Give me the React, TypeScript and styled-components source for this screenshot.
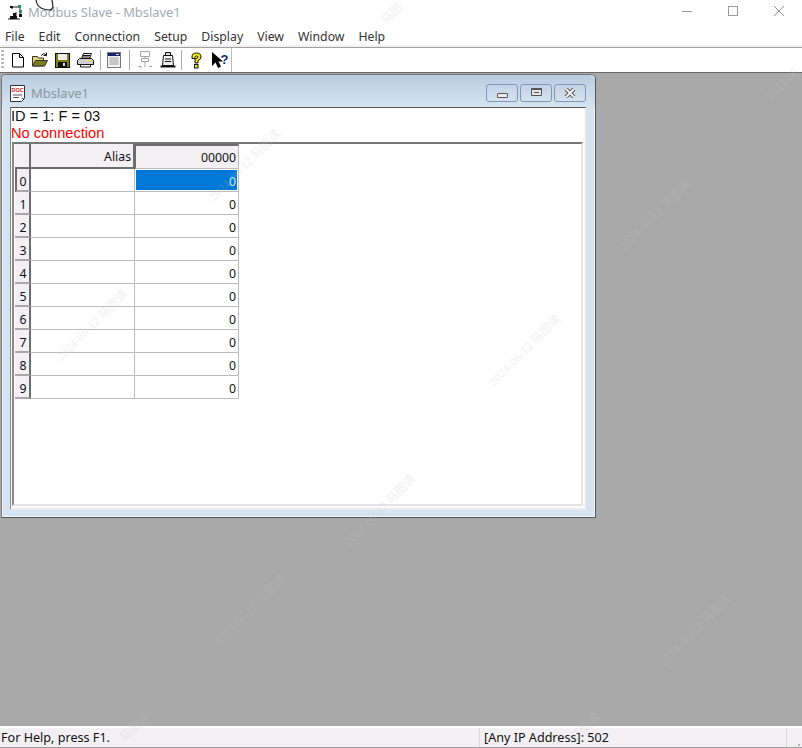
import styled, { createGlobalStyle } from 'styled-components';

const GlobalStyle = createGlobalStyle`
  html, body {
    margin: 0;
    padding: 0;
    background: #ffffff;
  }
  * {
    box-sizing: border-box;
  }
`;

const menus = ['File', 'Edit', 'Connection', 'Setup', 'Display', 'View', 'Window', 'Help'];
const rows = [0, 1, 2, 3, 4, 5, 6, 7, 8, 9];
const fullMark = '2024-06-12 马图读';
const marks: [number, number, string][] = [
  [92, 325, fullMark],
  [525, 350, fullMark],
  [380, 510, fullMark],
  [655, 215, fullMark],
  [245, 165, fullMark],
  [250, 610, fullMark],
  [695, 630, fullMark],
  [135, 727, '马图读'],
  [585, 727, '马图读'],
  [782, 84, '2024-06'],
  [392, 14, '马图'],
];

function AppIcon() {
  return (
    <svg width="16" height="16" viewBox="0 0 16 16">
      <path d="M1 14.500h12v1H1zM3 12h7v2.500H3z" fill="#111" />
      <path d="M5 3h6M5 3v2M13 3v9M9 8v4" stroke="#222" strokeWidth="1" fill="none" />
      <rect x="3" y="2" width="3" height="2" fill="#111" />
      <rect x="11" y="1" width="3" height="3" fill="#2f8f4f" />
      <rect x="12" y="6" width="3" height="3" fill="#2f8f4f" />
      <rect x="12" y="10" width="3" height="3" fill="#111" />
      <rect x="6" y="9" width="3" height="3" fill="#111" />
    </svg>
  );
}

function NewIcon() {
  return (
    <svg width="14" height="16" viewBox="0 0 14 16">
      <path d="M1.500 1.500h7l4 4v9.500h-11z" fill="#fff" stroke="#000" />
      <path d="M8.500 1.500v4h4" fill="none" stroke="#000" />
    </svg>
  );
}

function OpenIcon() {
  return (
    <svg width="16" height="16" viewBox="0 0 16 16">
      <path d="M.5 4.500h5l1 1.500h5v8h-11z" fill="#e5d56a" stroke="#333" />
      <path d="M3.500 8.500h12l-3 5.500h-12z" fill="#7e7e1e" stroke="#333" />
      <path d="M9 3.500q2.500-3 5-1M14.500 .5v3h-3" fill="none" stroke="#111" />
    </svg>
  );
}

function SaveIcon() {
  return (
    <svg width="15" height="15" viewBox="0 0 15 15">
      <rect x=".5" y=".5" width="14" height="14" fill="#7e7e1e" stroke="#111" />
      <rect x="3" y="1" width="9" height="6" fill="#eeeeee" />
      <rect x="3" y="9" width="9" height="5" fill="#111" />
      <rect x="8" y="10" width="2" height="3" fill="#e0e0e0" />
    </svg>
  );
}

function PrintIcon() {
  return (
    <svg width="17" height="16" viewBox="0 0 17 16">
      <path d="M4.500 6.500l2-5h8l-2 5z" fill="#fff" stroke="#111" />
      <path d="M6 3.500h7M5.500 5h7" stroke="#111" />
      <path d="M2.500 6.500h12l2 2v4h-16v-4z" fill="#cfcfcf" stroke="#111" />
      <rect x="11" y="8" width="3" height="1.500" fill="#e6d93c" />
      <path d="M3.500 12.500h10v2.500h-10z" fill="#fff" stroke="#111" />
    </svg>
  );
}

function WindowIcon() {
  return (
    <svg width="14" height="16" viewBox="0 0 14 16">
      <rect x=".5" y=".5" width="13" height="15" fill="#f3f1f4" stroke="#777" />
      <rect x="1" y="1" width="12" height="3" fill="#16246e" />
      <rect x="9" y="2" width="3" height="1" fill="#dfe3f2" />
      <path d="M2.500 6h9M2.500 8h9M2.500 10h9M2.500 12h9" stroke="#9a9a9a" />
    </svg>
  );
}

function ConnectIcon() {
  return (
    <svg width="16" height="18" viewBox="0 0 16 18">
      <path d="M3.500.5h9v5h-9zM4.500 7.500h7v3h-7zM8 5v2M8 11v3" fill="none" stroke="#a4a4a4" />
      <path d="M1 15.500h3v2M12 15.500h3M7 15h2" fill="none" stroke="#a4a4a4" />
    </svg>
  );
}

function DisconnectIcon() {
  return (
    <svg width="16" height="18" viewBox="0 0 16 18">
      <path d="M5.500 4.500v-3h5v3" fill="#ddd" stroke="#111" />
      <path d="M3.500 4.500h9l1 10h-11z" fill="#f3f1f4" stroke="#111" />
      <path d="M5 8h6M5 10.500h6" stroke="#111" />
      <path d="M.5 15.500h15" stroke="#111" strokeWidth="2" />
    </svg>
  );
}

function HelpIcon() {
  return (
    <svg width="11" height="17" viewBox="0 0 11 17">
      <path
        d="M1 5q0-4 4.500-4t4.500 4q0 2.500-3 3.500v2.500h-3v-4q3-1 3-2t-1.500-1-1.500 1.500v1h-3z"
        fill="#f4f000"
        stroke="#111"
      />
      <rect x="3.500" y="12.500" width="3.500" height="3.500" fill="#f4f000" stroke="#111" />
    </svg>
  );
}

function ContextHelpIcon() {
  return (
    <svg width="17" height="16" viewBox="0 0 17 16">
      <path d="M0 0v14l3.500-3.500 2.500 5.500 3-1.500-2.500-5h4.500z" fill="#000" />
      <text x="8.500" y="12" fontFamily="Liberation Sans, sans-serif" fontWeight="700" fontSize="13" fill="#16246e">
        ?
      </text>
    </svg>
  );
}

function DocIcon() {
  return (
    <svg width="16" height="17" viewBox="0 0 16 17">
      <path d="M.5.5h14v13l-3 3h-11z" fill="#fff" stroke="#333" />
      <text x="1.500" y="7" fontFamily="Liberation Sans, sans-serif" fontWeight="700" fontSize="5.500" fill="#d82020">
        DOC
      </text>
      <path d="M3 10h9M3 12.500h6" stroke="#555" />
      <path d="M11.500 13.500h3" stroke="#2a8f8f" />
    </svg>
  );
}

export default function App() {
  return (
    <>
      <GlobalStyle />
      <Page>
        <TitleBar>
          <AppTitle>
            <AppIcon />
            <TitleText>Modbus Slave - Mbslave1</TitleText>
          </AppTitle>
          <Caption>
            <CaptionBtn>
              <svg width="10" height="10" viewBox="0 0 10 10">
                <path d="M0 5.500h10" stroke="#999" />
              </svg>
            </CaptionBtn>
            <CaptionBtn>
              <svg width="10" height="10" viewBox="0 0 10 10">
                <rect x=".5" y=".5" width="9" height="9" fill="none" stroke="#999" />
              </svg>
            </CaptionBtn>
            <CaptionBtn>
              <svg width="10" height="10" viewBox="0 0 10 10">
                <path d="M0 0l10 10M10 0L0 10" stroke="#999" />
              </svg>
            </CaptionBtn>
          </Caption>
        </TitleBar>

        <MenuBar>
          {menus.map((m) => (
            <MenuItem key={m}>{m}</MenuItem>
          ))}
        </MenuBar>

        <ToolBar>
          <Grip />
          <ToolGroup $width={96} $pad={7} $gap={7}>
            <NewIcon />
            <OpenIcon />
            <SaveIcon />
            <PrintIcon />
          </ToolGroup>
          <ToolSep />
          <ToolGroup $width={28} $pad={6} $gap={0}>
            <WindowIcon />
          </ToolGroup>
          <ToolSep />
          <ToolGroup $width={51} $pad={7} $gap={7}>
            <ConnectIcon />
            <DisconnectIcon />
          </ToolGroup>
          <ToolSep />
          <ToolGroup $width={49} $pad={9} $gap={10}>
            <HelpIcon />
            <ContextHelpIcon />
          </ToolGroup>
          <ToolEnd />
        </ToolBar>

        <Workspace>
          <ChildWindow>
            <ChildTitle>
              <ChildName>
                <DocIcon />
                <ChildText>Mbslave1</ChildText>
              </ChildName>
              <ChildButtons>
                <ChildBtn>
                  <MinGlyph />
                </ChildBtn>
                <ChildBtn>
                  <MaxGlyph />
                </ChildBtn>
                <ChildBtn>
                  <svg width="12" height="10" viewBox="0 0 12 10">
                    <path d="M2 1l8 8M10 1L2 9" stroke="#555" strokeWidth="4" />
                    <path d="M2 1l8 8M10 1L2 9" stroke="#f6f6f6" strokeWidth="2" />
                  </svg>
                </ChildBtn>
              </ChildButtons>
            </ChildTitle>
            <ChildBody>
              <InfoLine>ID = 1: F = 03</InfoLine>
              <InfoLine $error>No connection</InfoLine>
              <GridFrame>
                <DataGrid>
                  <HeadCell />
                  <HeadCell>Alias</HeadCell>
                  <HeadCell $current>00000</HeadCell>
                  {rows.map((r) => (
                    <GridRow key={r}>
                      <RowHead $current={r === 0}>{r}</RowHead>
                      <Cell />
                      <Cell $selected={r === 0}>0</Cell>
                    </GridRow>
                  ))}
                </DataGrid>
              </GridFrame>
            </ChildBody>
          </ChildWindow>
        </Workspace>

        <StatusBar>
          <StatusHelp>For Help, press F1.</StatusHelp>
          <StatusAddress>[Any IP Address]: 502</StatusAddress>
          <StatusGrip />
        </StatusBar>

        {marks.map(([x, y, text]) => (
          <Watermark key={`${x}-${y}`} style={{ left: x, top: y }}>
            {text}
          </Watermark>
        ))}
        <CursorHint width="20" height="11" viewBox="0 0 20 11">
          <path d="M1 0q1 6 5 8t8 2q3 0 4-3l-1-7" fill="#fff" stroke="#222" strokeWidth="1.200" />
        </CursorHint>
      </Page>
    </>
  );
}

const Page = styled.div`
  position: relative;
  width: 802px;
  height: 748px;
  display: flex;
  flex-direction: column;
  overflow: hidden;
  background: #fff;
  font-family: 'Noto Sans', 'Open Sans', sans-serif;
`;

const Watermark = styled.span`
  position: absolute;
  transform: translate(-50%, -50%) rotate(-45deg);
  font-family: 'Liberation Serif', 'Noto Sans CJK SC', serif;
  font-size: 12px;
  line-height: 12px;
  white-space: nowrap;
  color: #c4c4c4;
  opacity: 0.25;
  pointer-events: none;
`;

const CursorHint = styled.svg`
  position: absolute;
  left: 35px;
  top: 0;
`;

const TitleBar = styled.div`
  height: 24px;
  display: flex;
  align-items: center;
  justify-content: space-between;
  background: #fff;
  flex: none;
`;

const AppTitle = styled.div`
  display: flex;
  align-items: center;
  padding-left: 7px;
  gap: 5px;
`;

const TitleText = styled.span`
  font-size: 12.900px;
  color: #a2abb4;
`;

const Caption = styled.div`
  display: flex;
  margin-top: -2px;
`;

const CaptionBtn = styled.div`
  width: 46px;
  height: 24px;
  display: flex;
  align-items: center;
  justify-content: center;
`;

const MenuBar = styled.div`
  height: 23px;
  display: flex;
  align-items: center;
  gap: 14px;
  padding: 3px 0 0 5px;
  background: #fff;
  border-bottom: 2px solid #f3f0f3;
  flex: none;
`;

const MenuItem = styled.span`
  font-size: 12.250px;
  color: #333;
`;

const ToolBar = styled.div`
  height: 26px;
  display: flex;
  align-items: center;
  border-top: 1px solid #a0a0a0;
  border-bottom: 1px solid #6a6a6a;
  background: #fff;
  flex: none;
`;

const Grip = styled.div`
  width: 3px;
  height: 20px;
  margin-left: 1px;
  background: repeating-linear-gradient(to bottom, #b8b8b8 0 2px, transparent 2px 4px);
`;

const ToolGroup = styled.div<{ $width: number; $pad: number; $gap: number }>`
  width: ${(p) => p.$width}px;
  display: flex;
  align-items: center;
  padding-left: ${(p) => p.$pad}px;
  gap: ${(p) => p.$gap}px;
`;

const ToolSep = styled.div`
  width: 1px;
  height: 20px;
  background: #a8a8a8;
`;

const ToolEnd = styled.div`
  width: 1px;
  height: 24px;
  background: #bbbbbb;
`;

const Workspace = styled.div`
  position: relative;
  flex: 1;
  background: #a9a9a9;
`;

const ChildWindow = styled.div`
  position: absolute;
  left: 1px;
  top: 1px;
  width: 595px;
  height: 444px;
  display: flex;
  flex-direction: column;
  border: 1px solid #555;
  border-top-color: #777;
  border-left-color: #777;
  border-radius: 5px 5px 0 0;
  background: #d6e4f1;
  box-shadow: inset 0 0 0 1px #f4f8fb;
`;

const ChildTitle = styled.div`
  height: 32px;
  flex: none;
  display: flex;
  align-items: center;
  justify-content: space-between;
  padding: 4px 9px 0 8px;
  background: linear-gradient(to bottom, #b9cce0, #d6e4f1);
  border-radius: 5px 5px 0 0;
`;

const ChildName = styled.div`
  display: flex;
  align-items: center;
  gap: 5px;
`;

const ChildText = styled.span`
  font-size: 13px;
  color: #8d959d;
`;

const ChildButtons = styled.div`
  display: flex;
  gap: 2px;
`;

const ChildBtn = styled.div`
  width: 32px;
  height: 18px;
  display: flex;
  align-items: center;
  justify-content: center;
  border: 1px solid #8197ba;
  border-radius: 3px;
  background: linear-gradient(to bottom, #c3d2e5, #d6e2f0);
`;

const MinGlyph = styled.div`
  width: 11px;
  height: 5px;
  margin-top: 5px;
  background: #ececec;
  border: 1px solid #555;
  border-radius: 1px;
`;

const MaxGlyph = styled.div`
  width: 11px;
  height: 8px;
  margin-top: -3px;
  background: #e4e4e4;
  border: 1px solid #555;
  border-top-width: 2px;
  border-radius: 1px;
  box-shadow: inset 0 0 0 2px #e4e4e4, inset 0 0 0 4px #555;
`;

const ChildBody = styled.div`
  flex: 1;
  margin: 0 8px 7px 8px;
  display: flex;
  flex-direction: column;
  background: #fff;
  border-top: 1px solid #555;
  border-left: 1px solid #888;
  border-right: 2px solid #e6e2e6;
  border-bottom: 2px solid #efeaef;
`;

const InfoLine = styled.div<{ $error?: boolean }>`
  height: 17px;
  line-height: 17px;
  font-family: 'Liberation Sans', Arial, sans-serif;
  font-size: 14.600px;
  color: ${(p) => (p.$error ? '#ff0000' : '#111')};
  flex: none;
`;

const GridFrame = styled.div`
  flex: 1;
  margin: 0 2px 2px 1px;
  padding: 0 0 0 1px;
  border-top: 2px solid #777;
  border-left: 2px solid #888;
  border-bottom: 2px solid #e4e4e4;
  border-right: 2px solid #e8e4e8;
  background: #fff;
`;

const DataGrid = styled.div`
  display: grid;
  grid-template-columns: 16px 104px 104px;
  grid-template-rows: 25px;
  grid-auto-rows: 23px;
  width: 224px;
  font-size: 12.250px;
  color: #111;
`;

const GridRow = styled.div`
  display: contents;
`;

const HeadCell = styled.div<{ $current?: boolean }>`
  display: flex;
  align-items: center;
  justify-content: flex-end;
  padding-right: 2px;
  padding-top: ${(p) => (p.$current ? '0' : '2px')};
  background: #f3f0f3;
  border-right: ${(p) => (p.$current ? '1px solid #bcbcbc' : '2px solid #6d6d6d')};
  border-bottom: ${(p) => (p.$current ? '1px solid #bcbcbc' : '2px solid #6d6d6d')};
  border-left: ${(p) => (p.$current ? '1px solid #6d6d6d' : 'none')};
  border-top: ${(p) => (p.$current ? '2px solid #6d6d6d' : 'none')};
`;

const RowHead = styled.div<{ $current?: boolean }>`
  display: flex;
  align-items: center;
  justify-content: center;
  padding: 3px 0 0 ${(p) => (p.$current ? '0' : '2px')};
  background: #f3f0f3;
  border-right: 2px solid #6d6d6d;
  border-bottom: 2px solid #a8a8a8;
  border-left: ${(p) => (p.$current ? '2px solid #6d6d6d' : 'none')};
`;

const Cell = styled.div<{ $selected?: boolean }>`
  display: flex;
  align-items: center;
  justify-content: flex-end;
  padding: 3px 2px 0 0;
  color: ${(p) => (p.$selected ? '#d8e8f8' : '#111')};
  background: ${(p) => (p.$selected ? '#0078d7' : '#fff')};
  border-right: 1px solid #bcbcbc;
  border-bottom: 1px solid #bcbcbc;
  box-shadow: ${(p) => (p.$selected ? 'inset 0 0 0 1px #fff' : 'none')};
`;

const StatusBar = styled.div`
  height: 22px;
  flex: none;
  display: flex;
  align-items: center;
  background: #f3f0f3;
  border-top: 2px solid #fff;
  border-bottom: 1px solid #a0a0a0;
  font-size: 12.600px;
  color: #111;
`;

const StatusHelp = styled.div`
  width: 479px;
  padding-left: 1px;
  white-space: nowrap;
`;

const StatusAddress = styled.div`
  flex: 1;
  height: 100%;
  display: flex;
  align-items: center;
  padding-left: 4px;
  border-left: 1px solid #d8d8d8;
  border-right: 1px solid #d8d8d8;
  white-space: nowrap;
`;

const StatusGrip = styled.div`
  width: 15px;
  height: 100%;
  background: radial-gradient(circle, #b4b4b4 1px, transparent 1.200px) right 1px bottom 0 / 4px 4px no-repeat;
`;
